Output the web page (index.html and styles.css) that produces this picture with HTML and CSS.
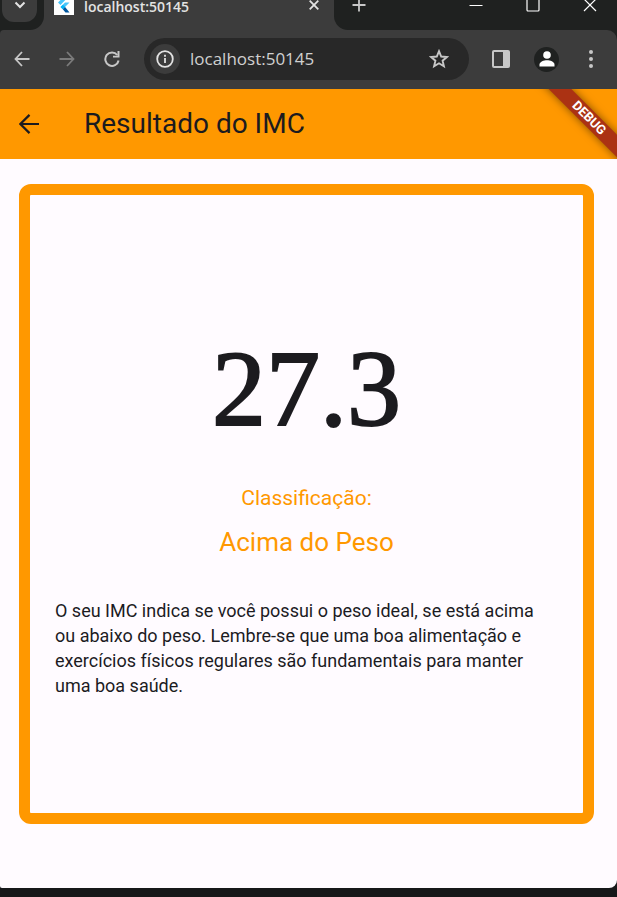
FILE: index.html
```html
<!DOCTYPE html>
<html lang="pt-BR">
<head>
<meta charset="utf-8">
<meta name="viewport" content="width=device-width, initial-scale=1">
<title>Resultado do IMC</title>
<link rel="stylesheet" href="styles.css">
</head>
<body>
<div class="window">
  <div class="tabstrip">
    <div class="strip-start">
      <button class="tab-search" type="button" aria-label="Pesquisar guias">
        <svg width="12" height="8" viewBox="0 0 12 8"><path d="M1.500 1.500 6 6l4.500-4.500" fill="none" stroke="#e3e3e3" stroke-width="2"/></svg>
      </button>
    </div>
    <div class="tab">
      <svg class="favicon" width="20" height="20" viewBox="0 0 20 20">
        <path fill="#fff" d="M0 0h20v20H0z"/>
        <path fill="#47c5fb" d="M11.500 0 4 7.500 6.500 10 16 0zM11 7.500 6.500 12l2.300 2.300L15.500 7.500z"/>
        <path fill="#00b5f8" d="m6.500 12 2.300-2.300 2.400 2.300-2.400 2.300z"/>
        <path fill="#00569e" d="m8.800 14.300 2.300-2.300 4.400 5.500H11.500z"/>
      </svg>
      <span class="tab-title">localhost:50145</span>
      <button class="icon-button" type="button" aria-label="Fechar guia">
        <svg width="10" height="10" viewBox="0 0 10 10"><path d="m.7.700 8.600 8.600m0-8.600L.7 9.300" stroke="#e3e3e3" stroke-width="1.800"/></svg>
      </button>
    </div>
    <div class="strip-end">
      <button class="icon-button" type="button" aria-label="Nova guia">
        <svg width="14" height="14" viewBox="0 0 14 14"><path d="M7 .5v13M.5 7h13" stroke="#c7c7c7" stroke-width="1.800"/></svg>
      </button>
      <div class="window-controls">
        <button class="icon-button" type="button" aria-label="Minimizar">
          <svg width="14" height="14" viewBox="0 0 14 14"><path d="M.5 7.500h13" stroke="#fff"/></svg>
        </button>
        <button class="icon-button" type="button" aria-label="Maximizar">
          <svg width="14" height="14" viewBox="0 0 14 14"><rect x="1" y="1" width="12" height="12" rx="1" fill="none" stroke="#fff" stroke-width="1.200"/></svg>
        </button>
        <button class="icon-button" type="button" aria-label="Fechar">
          <svg width="14" height="14" viewBox="0 0 14 14"><path d="m1 1 12 12m0-12L1 13" stroke="#fff" stroke-width="1.200"/></svg>
        </button>
      </div>
    </div>
  </div>

  <div class="toolbar">
    <div class="navigation">
      <button class="icon-button" type="button" aria-label="Voltar">
        <svg width="16" height="16" viewBox="0 0 16 16"><path d="M15.500 8H2M8 1 1.500 8 8 15" fill="none" stroke="#c7c7c7" stroke-width="1.800"/></svg>
      </button>
      <button class="icon-button" type="button" aria-label="Avançar">
        <svg width="16" height="16" viewBox="0 0 16 16"><path d="M.5 8H14M8 1l6.500 7L8 15" fill="none" stroke="#7b7b7b" stroke-width="1.800"/></svg>
      </button>
      <button class="icon-button" type="button" aria-label="Recarregar">
        <svg width="16" height="16" viewBox="0 0 16 16"><path d="M14.600 9.500A6.700 6.700 0 1 1 13.300 4" fill="none" stroke="#c7c7c7" stroke-width="2"/><path d="M15.500 0v6.500H9V4.800H13.500V0z" fill="#c7c7c7"/></svg>
      </button>
    </div>
    <div class="address">
      <button class="site-info" type="button" aria-label="Informações do site">
        <svg width="18" height="18" viewBox="0 0 18 18"><circle cx="9" cy="9" r="7.800" fill="none" stroke="#e3e3e3" stroke-width="1.800"/><path d="M9 8v5M9 4.800v2" stroke="#e3e3e3" stroke-width="1.800"/></svg>
      </button>
      <input class="url" type="text" value="localhost:50145" aria-label="Endereço" spellcheck="false">
      <button class="icon-button" type="button" aria-label="Adicionar aos favoritos">
        <svg width="20" height="20" viewBox="0 0 20 20"><path d="m10 2.200 2.200 5.300 5.700.5-4.300 3.700 1.300 5.600L10 14.300l-4.900 3 1.300-5.600L2.100 8l5.700-.5z" fill="none" stroke="#c7c7c7" stroke-width="1.900"/></svg>
      </button>
    </div>
    <div class="actions">
      <button class="icon-button" type="button" aria-label="Painel lateral">
        <svg width="18" height="18" viewBox="0 0 18 18"><rect width="18" height="18" rx="2" fill="#c7c7c7"/><path fill="#3c3c3c" d="M2 2h9v14H2z"/></svg>
      </button>
      <button class="profile" type="button" aria-label="Perfil">
        <svg width="16" height="16" viewBox="0 0 16 16"><circle cx="8" cy="4" r="3.800" fill="#fff"/><path d="M.5 15.500v-2C.5 10.800 5 9.300 8 9.300s7.500 1.500 7.500 4.200v2z" fill="#fff"/></svg>
      </button>
      <button class="icon-button" type="button" aria-label="Menu">
        <svg width="4" height="18" viewBox="0 0 4 18"><circle cx="2" cy="2" r="2" fill="#c7c7c7"/><circle cx="2" cy="9" r="2" fill="#c7c7c7"/><circle cx="2" cy="16" r="2" fill="#c7c7c7"/></svg>
      </button>
    </div>
  </div>

  <div class="page">
    <header class="appbar">
      <button class="icon-button" type="button" aria-label="Voltar à página anterior">
        <svg width="20" height="20" viewBox="0 0 20 20"><path d="M20 10H2M10.500.900 1.400 10l9.100 9.100" fill="none" stroke="#1c1b1f" stroke-width="2.200"/></svg>
      </button>
      <h1 class="title">Resultado do IMC</h1>
      <span class="debug">DEBUG</span>
    </header>
    <main class="content">
      <section class="card">
        <p class="score">27.3</p>
        <p class="label">Classificação:</p>
        <p class="result">Acima do Peso</p>
        <p class="text">O seu IMC indica se você possui o peso ideal, se está acima ou abaixo do peso. Lembre-se que uma boa alimentação e exercícios físicos regulares são fundamentais para manter uma boa saúde.</p>
      </section>
    </main>
  </div>
</div>
</body>
</html>
```
FILE: styles.css
```css
* {
  box-sizing: border-box;
}

body {
  margin: 0;
  background: #161819;
  font-family: Roboto, sans-serif;
  color: #1c1b1f;
}

button {
  padding: 0;
  border: 0;
  background: none;
}

p,
h1 {
  margin: 0;
  font-weight: 400;
}

svg {
  display: block;
}

.window {
  display: flex;
  flex-direction: column;
  min-height: 100vh;
  padding-bottom: 9px;
  background: linear-gradient(#1f2120 50%, #161819 50%);
}

.icon-button {
  flex: none;
}

.tabstrip {
  display: flex;
  height: 30px;
  background: #3c3c3c;
}

.strip-start {
  flex: none;
  width: 44px;
  padding-left: 2px;
  background: #1f2120;
  border-bottom-right-radius: 14px;
}

.tab-search {
  display: flex;
  justify-content: center;
  width: 35px;
  height: 22px;
  padding-top: 1px;
  background: #3c3c3c;
  border-radius: 0 0 12px 12px;
}

.tab {
  display: flex;
  align-items: flex-start;
  gap: 10px;
  width: 290px;
  padding: 0 15px 0 10px;
}

.favicon {
  margin-top: -5px;
}

.tab-title {
  flex: 1;
  font: 600 14px/14px "Open Sans", sans-serif;
  color: #e3e3e3;
}

.strip-end {
  flex: 1;
  display: flex;
  align-items: flex-start;
  justify-content: space-between;
  padding: 0 20px 0 18px;
  background: #1f2120;
  border-bottom-left-radius: 14px;
}

.strip-end svg {
  margin-top: -2px;
}

.window-controls {
  display: flex;
  gap: 43px;
}

.toolbar {
  display: flex;
  align-items: center;
  height: 59px;
  padding: 0 24px 1px 14px;
  background: #3c3c3c;
  border-radius: 4px 10px 0 0;
}

.navigation {
  display: flex;
  gap: 29px;
  margin-right: 24px;
}

.address {
  flex: 1;
  display: flex;
  align-items: center;
  min-width: 0;
  height: 42px;
  padding: 0 20px 0 6px;
  background: #282828;
  border-radius: 21px;
}

.site-info,
.profile {
  display: flex;
  flex: none;
  align-items: center;
  justify-content: center;
  width: 30px;
  height: 30px;
  background: #3c3c3c;
  border-radius: 50%;
}

.url {
  flex: 1;
  min-width: 0;
  padding: 0 0 0 10px;
  border: 0;
  outline: 0;
  background: none;
  color: #d0d0d0;
  font: 17px/24px "Open Sans", sans-serif;
}

.actions {
  display: flex;
  align-items: center;
  gap: 24px;
  margin-left: 23px;
}

.profile {
  width: 25px;
  height: 25px;
  background: #1f2120;
}

.actions .icon-button:last-child {
  margin-left: 6px;
}

.page {
  flex: 1;
  display: flex;
  flex-direction: column;
  background: #fffbff;
  border-radius: 0 0 8px 2px;
}

.appbar {
  position: relative;
  display: flex;
  align-items: center;
  gap: 45px;
  height: 70px;
  padding: 0 19px;
  overflow: hidden;
  background: #ff9800;
}

.title {
  font-size: 28px;
  line-height: 36px;
}

.debug {
  position: absolute;
  top: 21px;
  right: -32px;
  width: 120px;
  transform: rotate(45deg);
  background: #ab3213;
  box-shadow: 0 0 8px rgba(0, 0, 0, 0.5);
  color: #fff;
  font-size: 13px;
  font-weight: 700;
  line-height: 16px;
  text-align: center;
}

.content {
  flex: 1;
  display: flex;
  padding: 25px 23px 64px 19px;
}

.card {
  flex: 1;
  display: flex;
  flex-direction: column;
  justify-content: center;
  padding: 0 25px;
  border: 11px solid #ff9800;
  border-radius: 12px;
  text-align: center;
}

.score {
  font-family: "Liberation Serif", serif;
  font-size: 108px;
  line-height: 158px;
  -webkit-text-stroke: 2px #1c1b1f;
}

.label {
  margin-top: 15px;
  color: #ff9800;
  font-size: 21px;
  line-height: 30px;
}

.result {
  margin-top: 12px;
  color: #ff9800;
  font-size: 26px;
  line-height: 35px;
}

.text {
  margin-top: 38px;
  font-size: 18px;
  line-height: 25px;
  text-align: left;
}
```
